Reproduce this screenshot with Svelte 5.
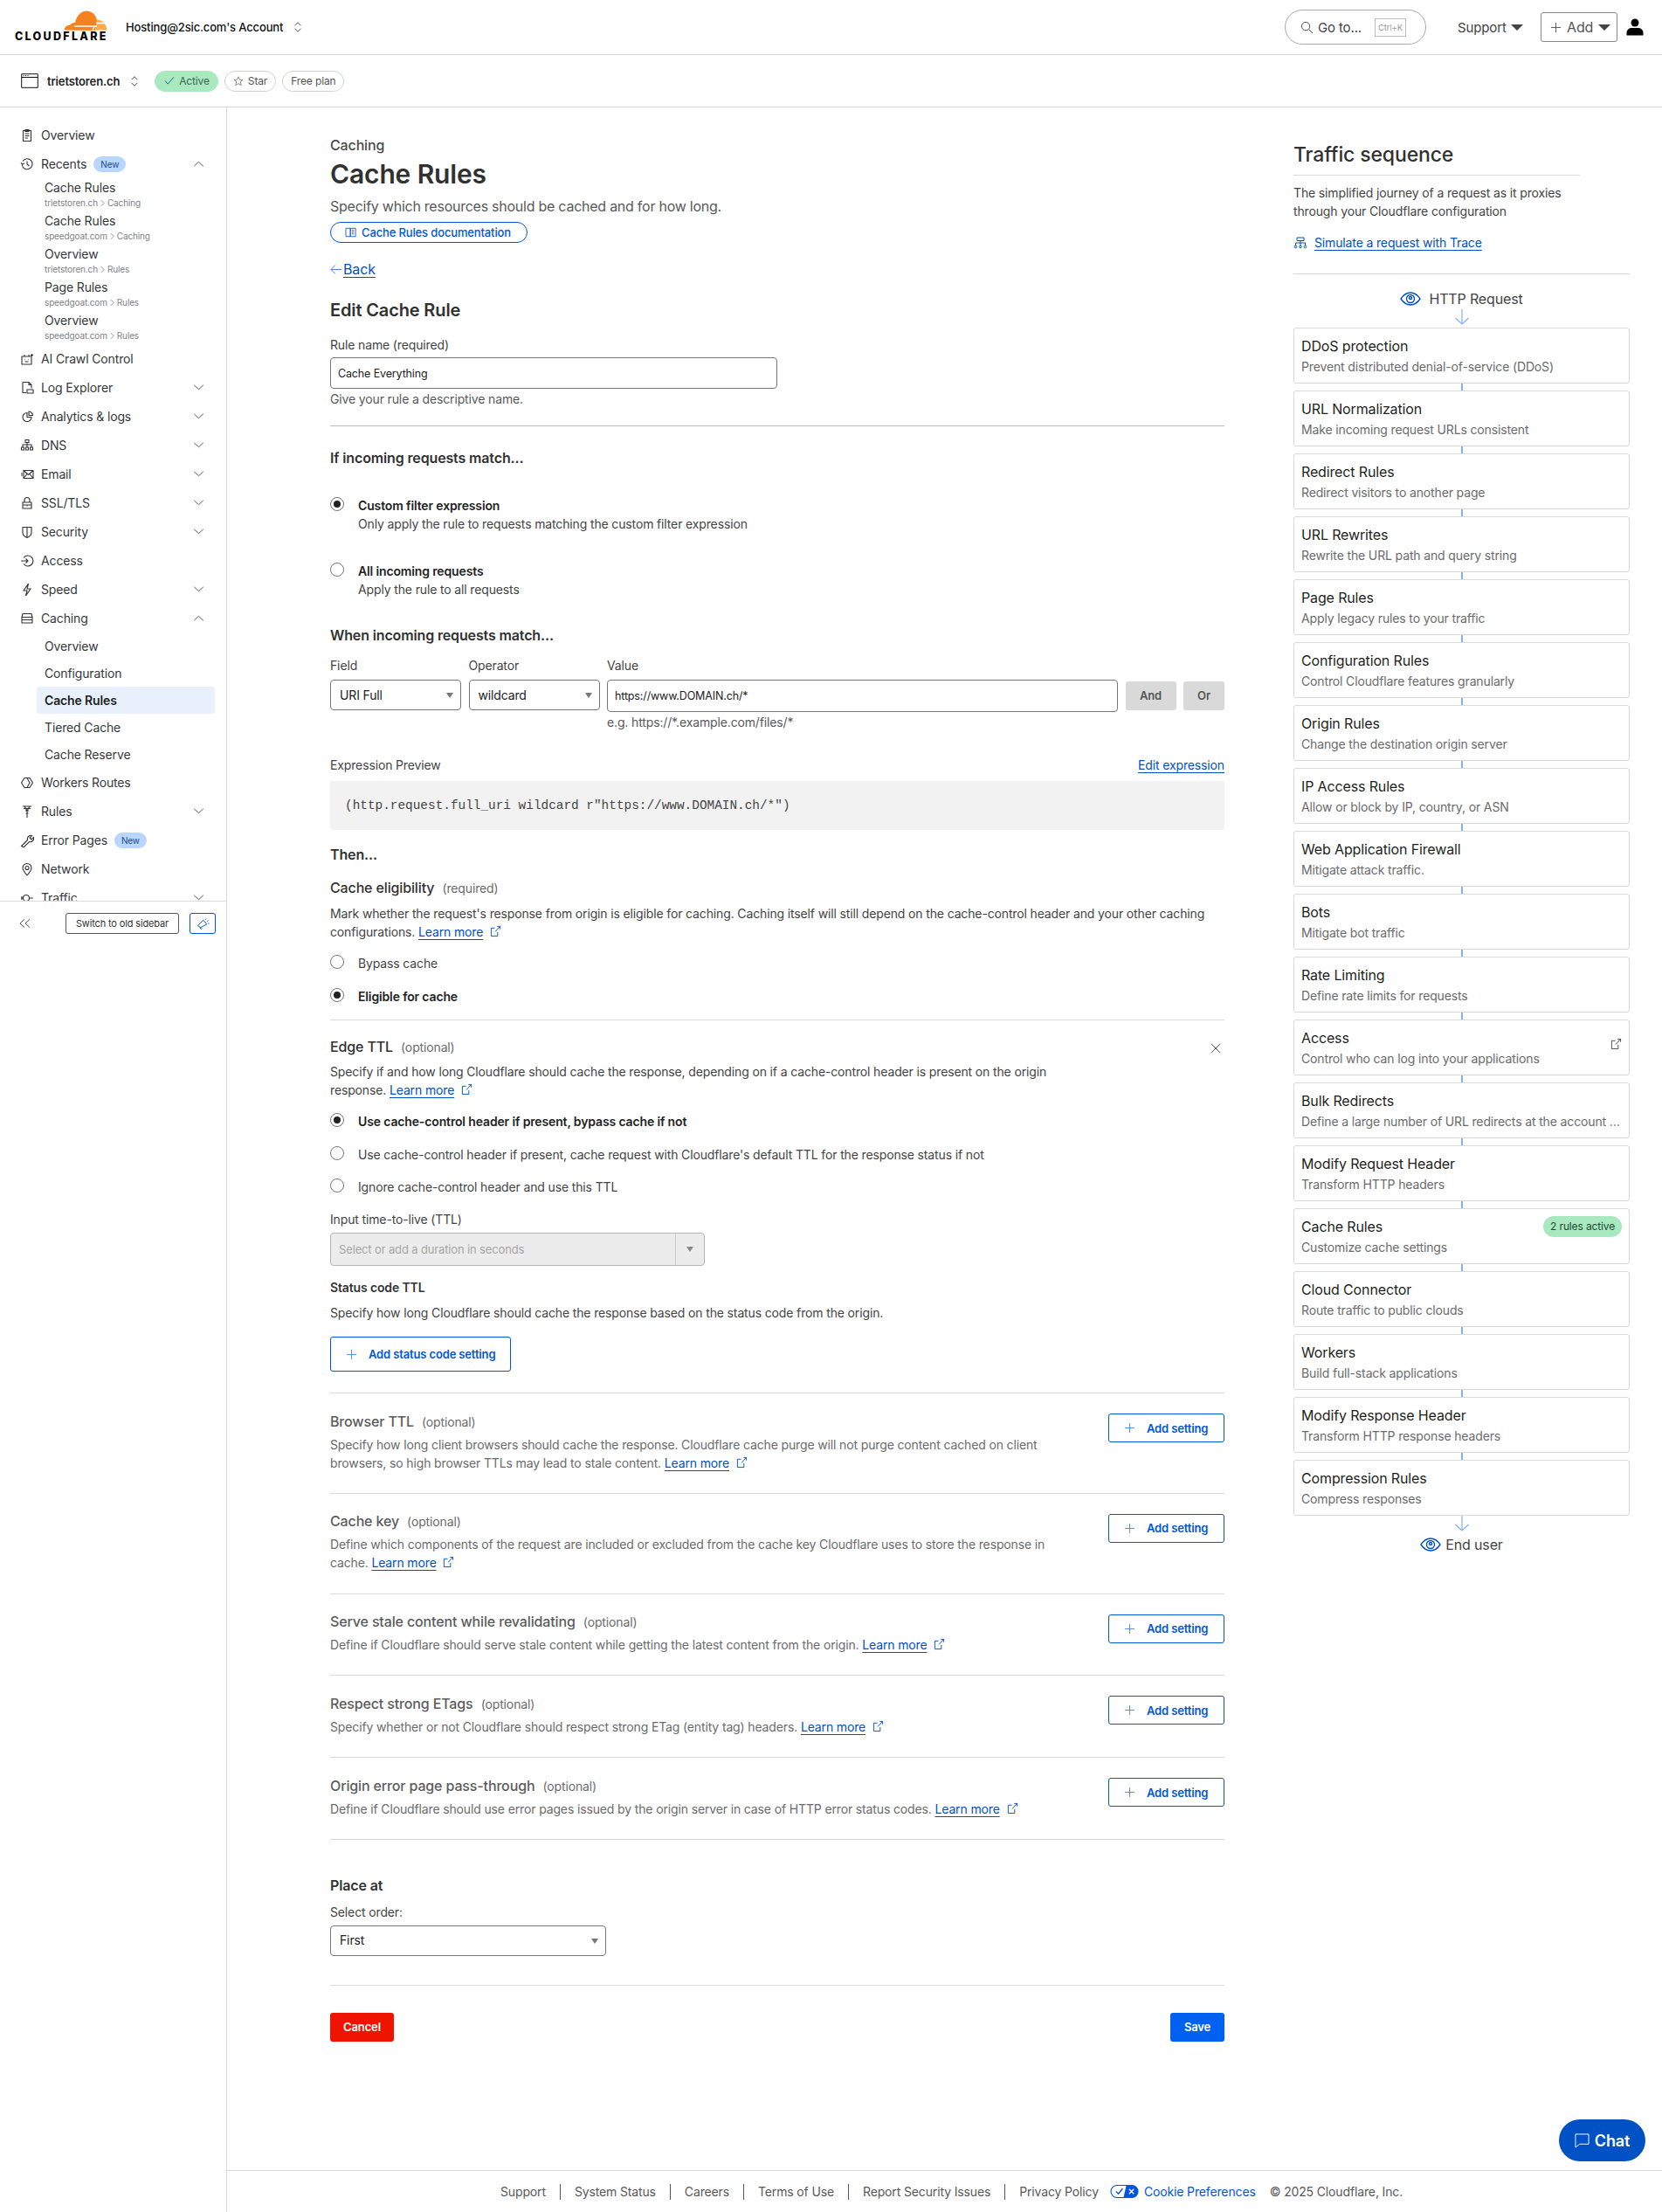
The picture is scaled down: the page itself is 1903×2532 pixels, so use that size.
<script>
  const paths = {
    clip: "M3.5 2.5h9v12h-9zM6 1.5h4v2H6zM5.5 6h5M5.5 8.5h5M5.5 11h3.5",
    clock: "M3 4.5A6 6 0 1 1 2.2 9M1 6.5l1.8 1.8 2-1.6M8 4.5V8l2.5 2",
    ai: "M2 5h11v9H2zM5 5V3M10 5V3M5.5 8.5h.5M9.5 8.5h.5M5.5 11h4M13.5 2v3M12 3.5h3",
    log: "M3 1.5h7l3 3v4M3 1.5v12h4M10 1.5v3h3M8 10h7v4H8z",
    chart: "M8 3.5a5 5 0 1 0 5 5H8zM10 2a5 5 0 0 1 4.5 4.5H10z",
    dns: "M6 1.5h4v3H6zM8 4.5V7M3 10V7h10v3M8 7v3M1.5 10h3v3h-3zM6.5 10h3v3h-3zM11.5 10h3v3h-3z",
    mail: "M4 3.5h11v9H4zM4 3.5l5.5 5 5.5-5M4 12.5l4-5M15 12.5l-4-5M1 7h2M1 9h2",
    lock: "M3 7h10v7H3zM5 7V4.5a3 3 0 0 1 6 0V7M3 10h10M8 9.5v2",
    shield: "M3 2.5h10v6c0 3-2.5 5-5 6-2.5-1-5-3-5-6zM8 2.5v12",
    access: "M1 8h8M6.5 5.5L9 8l-2.5 2.5M4 4.5a6 6 0 1 1 0 7",
    bolt: "M9.5 1L4 9h4l-1.5 6L12 7H8z",
    cache: "M3 2.5h10l1 4H2zM2 6.5h12v3H2zM2 9.5h12v3.5H2z",
    routes: "M5 2.5L1.5 8 5 13.5h6L14.5 8 11 2.5zM8 2.5L11 8l-3 5.5",
    rules: "M3 2h10M4 4.5h8M6 7h4M8 7v8M6.5 10h3M5 2l3 5 3-5",
    wrench: "M1.5 14.5l7-7a4 4 0 0 1 5-5L11 5l2 2 2.5-2.5a4 4 0 0 1-5 5L4 16z",
    pin: "M8 15c-3-3.5-5-6-5-8.5a5 5 0 0 1 10 0C13 9 11 11.5 8 15zM8 4.5a2 2 0 1 0 0 4 2 2 0 0 0 0-4z",
    traffic: "M1 8h3M7 4.5a3 3 0 1 1 0 7 3 3 0 0 1 0-7zM10.5 8H15M2 6v4"
  };

  const nav = [
    { icon: "log", label: "Log Explorer", more: true },
    { icon: "chart", label: "Analytics & logs", more: true },
    { icon: "dns", label: "DNS", more: true },
    { icon: "mail", label: "Email", more: true },
    { icon: "lock", label: "SSL/TLS", more: true },
    { icon: "shield", label: "Security", more: true },
    { icon: "access", label: "Access" },
    { icon: "bolt", label: "Speed", more: true }
  ];

  const recents = [
    ["Cache Rules", "trietstoren.ch", "Caching"],
    ["Cache Rules", "speedgoat.com", "Caching"],
    ["Overview", "trietstoren.ch", "Rules"],
    ["Page Rules", "speedgoat.com", "Rules"],
    ["Overview", "speedgoat.com", "Rules"]
  ];

  const cachingSub = ["Overview", "Configuration", "Cache Rules", "Tiered Cache", "Cache Reserve"];

  const optional = [
    { title: "Browser TTL", text: "Specify how long client browsers should cache the response. Cloudflare cache purge will not purge content cached on client browsers, so high browser TTLs may lead to stale content." },
    { title: "Cache key", text: "Define which components of the request are included or excluded from the cache key Cloudflare uses to store the response in cache." },
    { title: "Serve stale content while revalidating", text: "Define if Cloudflare should serve stale content while getting the latest content from the origin." },
    { title: "Respect strong ETags", text: "Specify whether or not Cloudflare should respect strong ETag (entity tag) headers." },
    { title: "Origin error page pass-through", text: "Define if Cloudflare should use error pages issued by the origin server in case of HTTP error status codes." }
  ];

  const sequence = [
    ["DDoS protection", "Prevent distributed denial-of-service (DDoS)"],
    ["URL Normalization", "Make incoming request URLs consistent"],
    ["Redirect Rules", "Redirect visitors to another page"],
    ["URL Rewrites", "Rewrite the URL path and query string"],
    ["Page Rules", "Apply legacy rules to your traffic"],
    ["Configuration Rules", "Control Cloudflare features granularly"],
    ["Origin Rules", "Change the destination origin server"],
    ["IP Access Rules", "Allow or block by IP, country, or ASN"],
    ["Web Application Firewall", "Mitigate attack traffic."],
    ["Bots", "Mitigate bot traffic"],
    ["Rate Limiting", "Define rate limits for requests"],
    ["Access", "Control who can log into your applications"],
    ["Bulk Redirects", "Define a large number of URL redirects at the account level"],
    ["Modify Request Header", "Transform HTTP headers"],
    ["Cache Rules", "Customize cache settings"],
    ["Cloud Connector", "Route traffic to public clouds"],
    ["Workers", "Build full-stack applications"],
    ["Modify Response Header", "Transform HTTP response headers"],
    ["Compression Rules", "Compress responses"]
  ];

  const footerLinks = ["Support", "System Status", "Careers", "Terms of Use", "Report Security Issues", "Privacy Policy"];
</script>

{#snippet icon(name)}
  <svg class="navIcon" viewBox="0 0 16 16"><path d={paths[name]} /></svg>
{/snippet}

{#snippet chevDown()}
  <svg class="chev" viewBox="0 0 14 8"><path d="M1 1l6 5.5L13 1" /></svg>
{/snippet}

{#snippet chevUp()}
  <svg class="chev" viewBox="0 0 14 8"><path d="M1 7l6-5.5L13 7" /></svg>
{/snippet}

{#snippet updown()}
  <svg class="updown" viewBox="0 0 10 16"><path d="M1 6l4-4 4 4M1 10l4 4 4-4" /></svg>
{/snippet}

{#snippet extLink()}
  <svg class="ext" viewBox="0 0 14 14"><path d="M6 3H1.5v10h8V8M6.5 7.5L12.5 1M9 1h3.5v3.5" /></svg>
{/snippet}

{#snippet plus()}
  <svg class="plus" viewBox="0 0 14 14"><path d="M7 1v12M1 7h12" /></svg>
{/snippet}

{#snippet eye()}
  <svg class="eye" viewBox="0 0 24 16"><path d="M1 8c3-4.5 7-7 11-7s8 2.5 11 7c-3 4.5-7 7-11 7S4 12.5 1 8z" /><circle cx="12" cy="8" r="4.5" /><circle cx="12" cy="7" r="1.5" /></svg>
{/snippet}

{#snippet arrowDown()}
  <svg class="arrowDown" viewBox="0 0 18 18"><path d="M9 0v17M1.5 10L9 17l7.5-7" /></svg>
{/snippet}

{#snippet learnMore()}
  <a class="link" href="#top">Learn more</a>
  {@render extLink()}
{/snippet}

<div class="page">
  <header class="topbar">
    <div class="logo">
      <svg class="cloud" viewBox="0 0 50 23">
        <path fill="#f6821f" d="M0.5 22.5C0.7 19.5 3 17 6 17c.5 0 .8-.1 1-.3 1.5-2.2 3.5-2.9 6-2.7C14.5 6 20 .5 26 .5c5.5 0 10 3.5 11.5 9l1 3.5-1 3.500c-.6 2.500-1.300 4.500-2 6.500z" />
        <path fill="#fbad41" d="M37.5 10.5c6.5-.3 11.5 5 12 12H36l1.5-5.5z" />
        <path fill="none" stroke="#fff" stroke-width="1.3" d="M12 18h25.5M33 22.5l2.5-5M37 14.5h13" />
      </svg>
      <span class="wordmark">CLOUDFLARE</span>
    </div>
    <div class="account">Hosting@2sic.com's Account</div>
    {@render updown()}
    <div class="spacer"></div>
    <div class="search">
      <svg class="searchIcon" viewBox="0 0 16 16"><circle cx="6.5" cy="6.5" r="5" /><path d="M10.5 10.5L15 15" /></svg>
      <span>Go to...</span>
      <span class="kbd">Ctrl+K</span>
    </div>
    <div class="support">Support <span class="caret"></span></div>
    <div class="addBtn">
      <svg class="addPlus" viewBox="0 0 14 14"><path d="M7 1v12M1 7h12" /></svg>
      Add <span class="caret"></span>
    </div>
    <svg class="user" viewBox="0 0 20 20"><circle cx="10" cy="5" r="4.5" fill="#000" /><path fill="#000" d="M0.5 19.5v-3c0-3.500 3-5.500 6-5.500h7c3 0 6 2 6 5.500v3z" /></svg>
  </header>

  <div class="zonebar">
    <svg class="zoneIcon" viewBox="0 0 20 17"><path d="M.7.7h18.6v15.6H.7zM.7 4.5h18.6" /><path d="M2.5 2.5h1M5 2.5h1M7.5 2.5h1" /></svg>
    <span class="zone">trietstoren.ch</span>
    {@render updown()}
    <span class="pill active">
      <svg viewBox="0 0 12 10"><path d="M.5 5L4 9l7.5-8.5" /></svg>
      Active
    </span>
    <span class="pill">
      <svg viewBox="0 0 14 14"><path d="M7 1l1.8 4h4.2l-3.4 2.8 1.2 4.7L7 10l-3.800 2.500 1.200-4.700L1 5h4.200z" /></svg>
      Star
    </span>
    <span class="pill">Free plan</span>
  </div>

  <div class="body">
    <aside class="sidebar">
      <nav class="navScroll">
        <div class="navItem">{@render icon("clip")}<span>Overview</span></div>
        <div class="navItem">
          {@render icon("clock")}<span>Recents</span><span class="newBadge">New</span>
          {@render chevUp()}
        </div>
        {#each recents as r}
          <div class="recent">
            <div>{r[0]}</div>
            <div class="crumb">{r[1]} <svg viewBox="0 0 6 10"><path d="M1 1l4 4-4 4" /></svg> {r[2]}</div>
          </div>
        {/each}
        <div class="navItem">{@render icon("ai")}<span>AI Crawl Control</span></div>
        {#each nav as n}
          <div class="navItem">
            {@render icon(n.icon)}<span>{n.label}</span>
            {#if n.more}{@render chevDown()}{/if}
          </div>
        {/each}
        <div class="navItem">{@render icon("cache")}<span>Caching</span>{@render chevUp()}</div>
        {#each cachingSub as s}
          <div class="subItem" class:current={s === "Cache Rules"}>{s}</div>
        {/each}
        <div class="navItem">{@render icon("routes")}<span>Workers Routes</span></div>
        <div class="navItem">{@render icon("rules")}<span>Rules</span>{@render chevDown()}</div>
        <div class="navItem">{@render icon("wrench")}<span>Error Pages</span><span class="newBadge">New</span></div>
        <div class="navItem">{@render icon("pin")}<span>Network</span></div>
        <div class="navItem">{@render icon("traffic")}<span>Traffic</span>{@render chevDown()}</div>
      </nav>
      <div class="navFoot">
        <svg class="collapse" viewBox="0 0 14 12"><path d="M6.5 1L1 6l5.500 5M13 1L7.500 6l5.500 5" /></svg>
        <span class="oldSidebar">Switch to old sidebar</span>
        <span class="megaphone">
          <svg viewBox="0 0 16 16"><path d="M1.5 10l7-6.500 4 5L5 12.500zM4 12l1.500 2.500 1.500-1M11 3l1-1.500M13 5l1.500-1M14 7.500h1.500" /></svg>
        </span>
      </div>
    </aside>

    <div class="right">
      <div class="columns">
        <main class="main">
          <div class="eyebrow">Caching</div>
          <h1>Cache Rules</h1>
          <p class="lead">Specify which resources should be cached and for how long.</p>
          <span class="docPill">
            <svg viewBox="0 0 16 14"><path d="M1 1.5h6v11H1zM7 1.5h7v11H7zM9 4h3M9 6.5h3M9 9h3" /></svg>
            Cache Rules documentation
          </span>
          <div class="back">
            <svg viewBox="0 0 13 11"><path d="M13 5.5H1M6 .5L1 5.500l5 5" /></svg>
            <a class="link" href="#top">Back</a>
          </div>
          <h2>Edit Cache Rule</h2>
          <div class="fieldLabel ruleName">Rule name (required)</div>
          <div class="input ruleInput">Cache Everything</div>
          <div class="hint">Give your rule a descriptive name.</div>
          <hr class="hrRule" />

          <h3 class="incoming">If incoming requests match...</h3>
          <div class="radioRow customFilter">
            <span class="radio on"></span>
            <div>
              <div class="strong">Custom filter expression</div>
              <div class="radioDesc">Only apply the rule to requests matching the custom filter expression</div>
            </div>
          </div>
          <div class="radioRow allRequests">
            <span class="radio"></span>
            <div>
              <div class="strong">All incoming requests</div>
              <div class="radioDesc">Apply the rule to all requests</div>
            </div>
          </div>

          <h3 class="whenMatch">When incoming requests match...</h3>
          <div class="exprGrid">
            <div class="fieldLabel">Field</div>
            <div class="fieldLabel">Operator</div>
            <div class="fieldLabel">Value</div>
            <div></div>
            <div></div>
            <div class="input select">URI Full<span class="miniCaret"></span></div>
            <div class="input select">wildcard<span class="miniCaret"></span></div>
            <div class="input valueInput">https://www.DOMAIN.ch/*</div>
            <span class="grayBtn">And</span>
            <span class="grayBtn">Or</span>
          </div>
          <div class="example">e.g. https://*.example.com/files/*</div>

          <div class="previewHead">
            <span>Expression Preview</span>
            <a class="link" href="#top">Edit expression</a>
          </div>
          <div class="code">(http.request.full_uri wildcard r"https://www.DOMAIN.ch/*")</div>

          <h3 class="then">Then...</h3>
          <div class="settingTitle eligibility">Cache eligibility <small>(required)</small></div>
          <p class="para eligText">
            Mark whether the request's response from origin is eligible for caching. Caching itself will still depend on the cache-control header and your other caching configurations.
            {@render learnMore()}
          </p>
          <div class="radioRow bypass"><span class="radio"></span><div>Bypass cache</div></div>
          <div class="radioRow eligible"><span class="radio on"></span><div class="strong">Eligible for cache</div></div>
          <hr class="hrEdge" />

          <div class="edgeHead">
            <div class="settingTitle">Edge TTL <small>(optional)</small></div>
            <svg class="close" viewBox="0 0 14 14"><path d="M1 1l12 12M13 1L1 13" /></svg>
          </div>
          <p class="para narrow edgeText">
            Specify if and how long Cloudflare should cache the response, depending on if a cache-control header is present on the origin response.
            {@render learnMore()}
          </p>
          <div class="radioRow ttl1"><span class="radio on"></span><div class="strong">Use cache-control header if present, bypass cache if not</div></div>
          <div class="radioRow ttl2"><span class="radio"></span><div>Use cache-control header if present, cache request with Cloudflare's default TTL for the response status if not</div></div>
          <div class="radioRow ttl2"><span class="radio"></span><div>Ignore cache-control header and use this TTL</div></div>
          <div class="fieldLabel ttlLabel">Input time-to-live (TTL)</div>
          <div class="ttlSelect">
            <span class="ttlText">Select or add a duration in seconds</span>
            <span class="ttlArrow"><span class="miniCaret static"></span></span>
          </div>
          <div class="statusTitle">Status code TTL</div>
          <p class="statusText">Specify how long Cloudflare should cache the response based on the status code from the origin.</p>
          <span class="outlineBtn statusBtn">{@render plus()}Add status code setting</span>
          <hr class="hrStatus" />

          {#each optional as o}
            <section class="optional">
              <div class="optionalText">
                <div class="settingTitle muted">{o.title} <small>(optional)</small></div>
                <p class="para muted">{o.text} {@render learnMore()}</p>
              </div>
              <span class="outlineBtn addSetting">{@render plus()}Add setting</span>
            </section>
          {/each}

          <h3 class="placeAt">Place at</h3>
          <div class="fieldLabel orderLabel">Select order:</div>
          <div class="input select orderSelect">First<span class="miniCaret"></span></div>
          <hr class="hrPlace" />
          <div class="actions">
            <span class="cancel">Cancel</span>
            <span class="save">Save</span>
          </div>
        </main>

        <aside class="traffic">
          <h2 class="trafficTitle">Traffic sequence</h2>
          <p class="trafficText">The simplified journey of a request as it proxies through your Cloudflare configuration</p>
          <div class="trace">
            <svg viewBox="0 0 16 14"><path d="M4 1h8v3.5H4zM8 4.5V7M2.5 10V7h11v3M8 7v3" /><circle cx="2.5" cy="11.5" r="1.3" /><circle cx="8" cy="11.5" r="1.3" /><circle cx="13.5" cy="11.5" r="1.3" /></svg>
            <a class="link" href="#top">Simulate a request with Trace</a>
          </div>
          <hr class="hrTrace" />
          <div class="endpoint first">{@render eye()}<span>HTTP Request</span></div>
          <div class="arrowWrap">{@render arrowDown()}</div>
          <div class="cards">
            {#each sequence as s, i}
              {#if i > 0}<div class="connector"></div>{/if}
              <div class="card">
                <div class="cardTitle">{s[0]}</div>
                <div class="cardText">{s[1]}</div>
                {#if s[0] === "Cache Rules"}<span class="rulesActive">2 rules active</span>{/if}
                {#if s[0] === "Access"}<svg class="ext cardExt" viewBox="0 0 14 14"><path d="M6 3H1.5v10h8V8M6.5 7.5L12.5 1M9 1h3.5v3.5" /></svg>{/if}
              </div>
            {/each}
          </div>
          <div class="arrowWrap">{@render arrowDown()}</div>
          <div class="endpoint">{@render eye()}<span>End user</span></div>
        </aside>
      </div>

      <footer class="footer">
        {#each footerLinks as f, i}
          <span class="footLink" class:lastLink={i === footerLinks.length - 1}>{f}</span>
        {/each}
        <svg class="privacy" viewBox="0 0 30 14">
          <rect x="0.5" y="0.5" width="29" height="13" rx="6.5" fill="#fff" stroke="#0055dc" />
          <path fill="#0055dc" d="M17 0.5h6a6.5 6.5 0 0 1 0 13h-9z" />
          <path fill="none" stroke="#0055dc" stroke-width="1.3" d="M6 7l2.5 2.5L13 4" />
          <path fill="none" stroke="#fff" stroke-width="1.3" d="M20 4.5l5 5M25 4.5l-5 5" />
        </svg>
        <span class="cookie">Cookie Preferences</span>
        <span class="copyright">© 2025 Cloudflare, Inc.</span>
      </footer>
    </div>
  </div>

  <div class="chat">
    <svg viewBox="0 0 18 18"><path d="M1 1h16v12H6l-5 4z" /></svg>
    Chat
  </div>
</div>

<style>
  :global(body) {
    margin: 0;
    background: #fff;
    font-family: Inter, "Noto Sans", sans-serif;
    font-size: 14px;
    letter-spacing: -0.14px;
    color: #313131;
  }

  svg {
    display: block;
    flex: none;
    fill: none;
    stroke: currentColor;
    stroke-width: 1;
  }

  hr {
    border: 0;
    border-top: 1px solid #d9d9d9;
    margin: 0;
  }

  h1,
  h2,
  h3,
  p {
    margin: 0;
  }

  .page {
    position: relative;
    width: 1903px;
    height: 2532px;
    display: flex;
    flex-direction: column;
    overflow: hidden;
  }

  .topbar {
    height: 62px;
    flex: none;
    display: flex;
    align-items: center;
    padding: 0 21px 0 17px;
    border-bottom: 1px solid #d9d9d9;
  }

  .logo {
    width: 106px;
    display: flex;
    flex-direction: column;
    margin-right: 21px;
    margin-top: -2px;
  }

  .cloud {
    width: 50px;
    height: 23px;
    stroke: none;
    margin-left: 56px;
  }

  .wordmark {
    font-weight: 800;
    font-size: 12.5px;
    line-height: 13px;
    letter-spacing: 2.3px;
    color: #000;
    white-space: nowrap;
  }

  .account {
    font-weight: 500;
    font-size: 13px;
    color: #111;
    margin-right: 12px;
  }

  .updown {
    width: 10px;
    height: 14px;
    color: #333;
  }

  .spacer {
    flex: 1;
  }

  .search {
    width: 162px;
    height: 40px;
    box-sizing: border-box;
    border: 1px solid #aaa;
    border-radius: 20px;
    display: flex;
    align-items: center;
    padding-left: 17px;
    gap: 5px;
    color: #444;
    font-size: 15px;
  }

  .searchIcon {
    width: 15px;
    height: 15px;
  }

  .kbd {
    margin-left: 10px;
    width: 36px;
    height: 21px;
    box-sizing: border-box;
    border: 1px solid #bbb;
    color: #999;
    font-size: 9.5px;
    line-height: 19px;
    text-align: center;
  }

  .support {
    margin-left: 36px;
    width: 75px;
    color: #444;
    font-size: 15px;
    display: flex;
    align-items: center;
    gap: 5px;
  }

  .caret {
    display: inline-block;
    border-left: 7px solid transparent;
    border-right: 7px solid transparent;
    border-top: 7px solid #444;
  }

  .addBtn {
    margin-left: 20px;
    width: 88px;
    height: 34px;
    box-sizing: border-box;
    border: 1px solid #888;
    border-radius: 3px;
    display: flex;
    align-items: center;
    padding-left: 10px;
    gap: 6px;
    font-size: 16px;
    color: #555;
  }

  .addPlus {
    width: 13px;
    height: 13px;
  }

  .user {
    width: 20px;
    height: 20px;
    stroke: none;
    margin-left: 10px;
  }

  .zonebar {
    height: 59px;
    flex: none;
    display: flex;
    align-items: center;
    padding-left: 24px;
    border-bottom: 1px solid #d9d9d9;
  }

  .zoneIcon {
    width: 20px;
    height: 17px;
    color: #111;
  }

  .zone {
    font-weight: 600;
    font-size: 13px;
    color: #222;
    margin: 0 12px 0 10px;
  }

  .pill {
    height: 24px;
    box-sizing: border-box;
    border: 1px solid #d2d2d2;
    border-radius: 12px;
    padding: 0 9px;
    margin-left: 7px;
    display: flex;
    align-items: center;
    gap: 5px;
    font-size: 12px;
    color: #555;
  }

  .pill svg {
    width: 12px;
    height: 12px;
    color: #777;
  }

  .pill.active {
    margin-left: 18px;
    background: #a9e9bf;
    border-color: #a9e9bf;
    padding: 0 9px 0 10px;
    color: #41644f;
  }

  .pill.active svg {
    color: #0f5d80;
    height: 9px;
  }

  .body {
    flex: 1;
    display: flex;
    min-height: 0;
  }

  .sidebar {
    width: 259px;
    flex: none;
    border-right: 1px solid #d9d9d9;
  }

  .navScroll {
    height: 909px;
    box-sizing: border-box;
    padding-top: 15px;
    overflow: hidden;
    border-bottom: 1px solid #d9d9d9;
    color: #36393a;
  }

  .navItem {
    height: 33px;
    display: flex;
    align-items: center;
    padding-left: 23px;
    padding-right: 25px;
    font-size: 14px;
    line-height: 20px;
    white-space: nowrap;
  }

  .navIcon {
    width: 16px;
    height: 16px;
    margin-right: 8px;
    color: #333;
    stroke-width: 1.1;
  }

  .chev {
    width: 13px;
    height: 7px;
    margin-left: auto;
    color: #444;
  }

  .newBadge {
    margin-left: 8px;
    width: 37px;
    height: 18px;
    border-radius: 9px;
    background: #b9d6ff;
    color: #1b4a8a;
    font-size: 10px;
    line-height: 18px;
    text-align: center;
  }

  .recent {
    height: 38px;
    box-sizing: border-box;
    padding: 1px 0 0 51px;
    line-height: 20px;
  }

  .crumb {
    display: flex;
    align-items: center;
    gap: 3px;
    font-size: 10px;
    line-height: 14px;
    color: #808285;
  }

  .crumb svg {
    width: 5px;
    height: 9px;
  }

  .subItem {
    height: 31px;
    line-height: 31px;
    padding-left: 9px;
    margin: 0 13px 0 42px;
    border-radius: 3px;
  }

  .subItem.current {
    background: #e9f1fd;
    font-weight: 600;
    color: #1d1f20;
  }

  .navFoot {
    height: 50px;
    display: flex;
    align-items: center;
    padding: 0 12px 0 22px;
  }

  .collapse {
    width: 13px;
    height: 12px;
    color: #444;
  }

  .oldSidebar {
    margin-left: 40px;
    width: 130px;
    height: 24px;
    box-sizing: border-box;
    border: 1px solid #555;
    border-radius: 3px;
    font-size: 11px;
    line-height: 22px;
    text-align: center;
    color: #333;
    white-space: nowrap;
  }

  .megaphone {
    margin-left: 12px;
    width: 30px;
    height: 24px;
    box-sizing: border-box;
    border: 1px solid #0055dc;
    border-radius: 3px;
    display: flex;
    align-items: center;
    justify-content: center;
    color: #0055dc;
  }

  .megaphone svg {
    width: 15px;
    height: 15px;
  }

  .right {
    flex: 1;
    min-width: 0;
    display: flex;
    flex-direction: column;
  }

  .columns {
    flex: 1;
    display: flex;
    padding-left: 118px;
    gap: 79px;
  }

  .main {
    width: 1024px;
    padding-top: 33px;
    line-height: 20px;
  }

  .eyebrow {
    font-size: 16px;
    line-height: 20px;
    font-weight: 500;
    color: #4a4a4a;
  }

  h1 {
    margin-top: 3px;
    font-size: 30px;
    line-height: 40px;
    font-weight: 600;
    color: #313131;
  }

  .lead {
    margin-top: 5px;
    font-size: 16px;
    line-height: 24px;
    letter-spacing: -0.25px;
    color: #595959;
  }

  .docPill {
    margin-top: 6px;
    width: 226px;
    height: 24px;
    box-sizing: border-box;
    border: 1px solid #0055dc;
    border-radius: 12px;
    display: flex;
    align-items: center;
    padding-left: 16px;
    gap: 5px;
    color: #0055dc;
    font-size: 13px;
    font-weight: 500;
    white-space: nowrap;
  }

  .docPill svg {
    width: 14px;
    height: 12px;
  }

  .back {
    margin-top: 18px;
    height: 24px;
    display: flex;
    align-items: center;
    gap: 2px;
    font-size: 16px;
    line-height: 24px;
  }

  .back svg {
    width: 13px;
    height: 11px;
    color: #4a7fd8;
  }

  .link {
    color: #0051c3;
    text-decoration: underline;
    text-underline-offset: 3px;
    text-decoration-thickness: 1px;
  }

  .main > h2 {
    margin-top: 21px;
    font-size: 20px;
    line-height: 28px;
    font-weight: 600;
  }

  .fieldLabel {
    font-size: 14px;
    line-height: 20px;
    color: #444;
  }

  .ruleName {
    margin-top: 16px;
  }

  .input {
    box-sizing: border-box;
    border: 1px solid #777;
    border-radius: 4px;
    background: #fff;
    color: #222;
    font-size: 14px;
    display: flex;
    align-items: center;
    padding-left: 8px;
  }

  .ruleInput {
    margin-top: 4px;
    width: 512px;
    height: 36px;
    padding-top: 2px;
    font-size: 12.5px;
  }

  .hint {
    margin-top: 2px;
    color: #595959;
  }

  .hrRule {
    margin-top: 20px;
    border-top-color: #bbb;
  }

  h3 {
    font-size: 16px;
    line-height: 24px;
    font-weight: 600;
    color: #313131;
  }

  .incoming {
    margin-top: 24px;
  }

  .radioRow {
    display: grid;
    grid-template-columns: 16px 1fr;
    column-gap: 16px;
    line-height: 20px;
    color: #444;
  }

  .radio {
    position: relative;
    width: 16px;
    height: 16px;
    box-sizing: border-box;
    border: 1px solid #777;
    border-radius: 50%;
    background: #fff;
  }

  .radio.on::after {
    content: "";
    position: absolute;
    left: 3px;
    top: 3px;
    width: 8px;
    height: 8px;
    border-radius: 50%;
    background: #222;
  }

  .strong {
    font-weight: 600;
    color: #222;
  }

  .radioDesc {
    margin-top: 1px;
    color: #444;
  }

  .customFilter {
    margin-top: 33px;
  }

  .allRequests {
    margin-top: 34px;
  }

  .whenMatch {
    margin-top: 30px;
  }

  .exprGrid {
    margin-top: 13px;
    display: grid;
    grid-template-columns: 150px 150px 1fr 58px 47px;
    column-gap: 8.5px;
    row-gap: 6px;
    align-items: start;
  }

  .select {
    position: relative;
    height: 35px;
    padding-left: 10px;
  }

  .miniCaret {
    position: absolute;
    right: 8px;
    top: 14px;
    border-left: 4px solid transparent;
    border-right: 4px solid transparent;
    border-top: 6px solid #777;
  }

  .miniCaret.static {
    position: static;
    display: block;
    border-top-color: #888;
  }

  .valueInput {
    height: 37px;
    font-size: 12.5px;
  }

  .grayBtn {
    margin-top: 2px;
    height: 33px;
    border-radius: 3px;
    background: #d9d9d9;
    font-weight: 600;
    font-size: 13px;
    line-height: 33px;
    text-align: center;
    color: #555;
  }

  .example {
    margin-top: 2px;
    margin-left: 317px;
    color: #595959;
  }

  .previewHead {
    margin-top: 29px;
    display: flex;
    justify-content: space-between;
    color: #444;
  }

  .code {
    margin-top: 8px;
    height: 56px;
    box-sizing: border-box;
    padding-left: 17px;
    border-radius: 3px;
    background: #f2f2f2;
    font-family: "Liberation Mono", monospace;
    font-size: 14.4px;
    letter-spacing: 0;
    line-height: 56px;
    color: #444;
  }

  .then {
    margin-top: 16px;
  }

  .settingTitle {
    font-size: 16px;
    line-height: 24px;
    font-weight: 500;
    color: #313131;
  }

  .settingTitle small {
    margin-left: 5px;
    font-size: 14px;
    font-weight: 400;
    color: #6b6b6b;
  }

  .settingTitle.muted {
    color: #5c5c5c;
  }

  .eligibility {
    margin-top: 14px;
  }

  .para {
    line-height: 21px;
    color: #444;
  }

  .para.muted {
    color: #6b6b6b;
    margin-top: 3px;
  }

  .para :global(svg),
  .ext {
    display: inline-block;
    vertical-align: -1px;
    width: 13px;
    height: 14px;
    margin-left: 4px;
    color: #0051c3;
  }

  .eligText {
    margin-top: 6px;
  }

  .bypass {
    margin-top: 16px;
  }

  .eligible {
    margin-top: 18px;
  }

  .hrEdge {
    margin-top: 16px;
  }

  .edgeHead {
    margin-top: 18px;
    display: flex;
    justify-content: space-between;
    align-items: flex-start;
  }

  .close {
    width: 12px;
    height: 12px;
    margin: 8px 4px 0 0;
    color: #444;
  }

  .narrow {
    width: 840px;
  }

  .edgeText {
    margin-top: 5px;
  }

  .ttl1 {
    margin-top: 16px;
  }

  .ttl2 {
    margin-top: 17.5px;
  }

  .ttlLabel {
    margin-top: 16.5px;
  }

  .ttlSelect {
    margin-top: 5px;
    width: 429px;
    height: 38px;
    box-sizing: border-box;
    border: 1px solid #b5b5b5;
    border-radius: 4px;
    background: #ececec;
    display: flex;
    align-items: center;
  }

  .ttlText {
    flex: 1;
    padding-left: 9px;
    font-size: 13px;
    color: #a6a6a6;
  }

  .ttlArrow {
    width: 32px;
    height: 100%;
    border-left: 1px solid #c8c8c8;
    display: flex;
    align-items: center;
    justify-content: center;
  }

  .statusTitle {
    margin-top: 15.5px;
    font-weight: 600;
    color: #333;
  }

  .statusText {
    margin-top: 9px;
    color: #444;
  }

  .outlineBtn {
    box-sizing: border-box;
    border: 1px solid #0055dc;
    border-radius: 3px;
    display: flex;
    align-items: center;
    color: #0055dc;
    font-size: 13px;
    font-weight: 600;
    white-space: nowrap;
  }

  .plus {
    width: 13px;
    height: 13px;
    color: #4a8cf0;
    margin-right: 13px;
  }

  .statusBtn {
    margin-top: 17px;
    width: 207px;
    height: 40px;
    padding-left: 17px;
  }

  .hrStatus {
    margin-top: 24px;
  }

  .optional {
    display: flex;
    justify-content: space-between;
    align-items: flex-start;
    padding: 19.5px 0 24.3px;
    border-bottom: 1px solid #d9d9d9;
  }

  .optionalText {
    width: 840px;
  }

  .addSetting {
    margin-top: 3.5px;
    width: 133px;
    height: 33px;
    padding-left: 17px;
  }

  .placeAt {
    margin-top: 40px;
  }

  .orderLabel {
    margin-top: 9px;
  }

  .orderSelect {
    margin-top: 5px;
    width: 316px;
  }

  .hrPlace {
    margin-top: 33px;
  }

  .actions {
    margin-top: 31px;
    display: flex;
    justify-content: space-between;
    color: #fff;
    font-size: 13px;
    font-weight: 600;
    line-height: 33px;
    text-align: center;
  }

  .cancel {
    width: 73px;
    height: 33px;
    border-radius: 3px;
    background: #ee1400;
  }

  .save {
    width: 62px;
    height: 33px;
    border-radius: 3px;
    background: #0060f0;
  }

  .traffic {
    width: 385px;
    flex: none;
    padding-top: 38px;
  }

  .trafficTitle {
    width: 328px;
    padding-bottom: 7px;
    border-bottom: 1px solid #d9d9d9;
    font-size: 23px;
    line-height: 32px;
    font-weight: 500;
    color: #313131;
  }

  .trafficText {
    margin-top: 9px;
    line-height: 21px;
    color: #444;
    width: 328px;
  }

  .trace {
    margin-top: 16px;
    display: flex;
    align-items: center;
    gap: 8px;
    line-height: 20px;
  }

  .trace svg {
    width: 16px;
    height: 14px;
    color: #0051c3;
  }

  .hrTrace {
    margin-top: 25px;
  }

  .endpoint {
    margin-top: 16px;
    height: 24px;
    display: flex;
    align-items: center;
    justify-content: center;
    gap: 9px;
    font-size: 16px;
    color: #444;
  }

  .endpoint:not(.first) {
    margin-top: 3px;
    gap: 5px;
  }

  .eye {
    width: 24px;
    height: 16px;
    color: #0051c3;
    stroke-width: 1.4;
  }

  .arrowWrap {
    height: 18px;
    display: flex;
    justify-content: center;
  }

  .arrowDown {
    width: 18px;
    height: 18px;
    color: #7fb0ff;
    stroke-width: 1.2;
  }

  .cards {
    margin-top: 3px;
  }

  .connector {
    width: 2px;
    height: 8px;
    margin: 0 auto;
    background: #7fb0ff;
  }

  .card {
    position: relative;
    height: 64px;
    box-sizing: border-box;
    border: 1px solid #d9d9d9;
    border-radius: 3px;
    padding: 8px 8px;
  }

  .cardTitle {
    font-size: 16px;
    line-height: 24px;
    color: #1d1f20;
  }

  .cardText {
    margin-top: 1px;
    font-size: 14px;
    line-height: 22px;
    color: #6b6b6b;
    white-space: nowrap;
    overflow: hidden;
    text-overflow: ellipsis;
  }

  .rulesActive {
    position: absolute;
    right: 8px;
    top: 8px;
    height: 24px;
    padding: 0 8px;
    border-radius: 12px;
    background: #a9e9bf;
    font-size: 12px;
    line-height: 24px;
    color: #1f4a33;
  }

  .cardExt {
    position: absolute;
    right: 8px;
    top: 20px;
    color: #444;
  }

  .footer {
    height: 47px;
    flex: none;
    border-top: 1px solid #d9d9d9;
    display: flex;
    align-items: center;
    padding-left: 313px;
    font-size: 14px;
    color: #595959;
  }

  .footLink {
    padding: 0 16px;
    border-right: 1px solid #555;
    line-height: 18px;
  }

  .footLink:first-child {
    padding-left: 0;
  }

  .footLink.lastLink {
    border-right: 0;
    padding-right: 13px;
  }

  .privacy {
    width: 33px;
    height: 15px;
    stroke: none;
    margin-right: 6px;
  }

  .cookie {
    color: #0055dc;
    margin-right: 16px;
  }

  .chat {
    position: absolute;
    left: 1785px;
    top: 2426px;
    width: 99px;
    height: 48px;
    border-radius: 24px;
    background: #0051c3;
    color: #fff;
    font-size: 18px;
    font-weight: 600;
    display: flex;
    align-items: center;
    justify-content: center;
    gap: 6px;
  }

  .chat svg {
    width: 17px;
    height: 17px;
  }
</style>
